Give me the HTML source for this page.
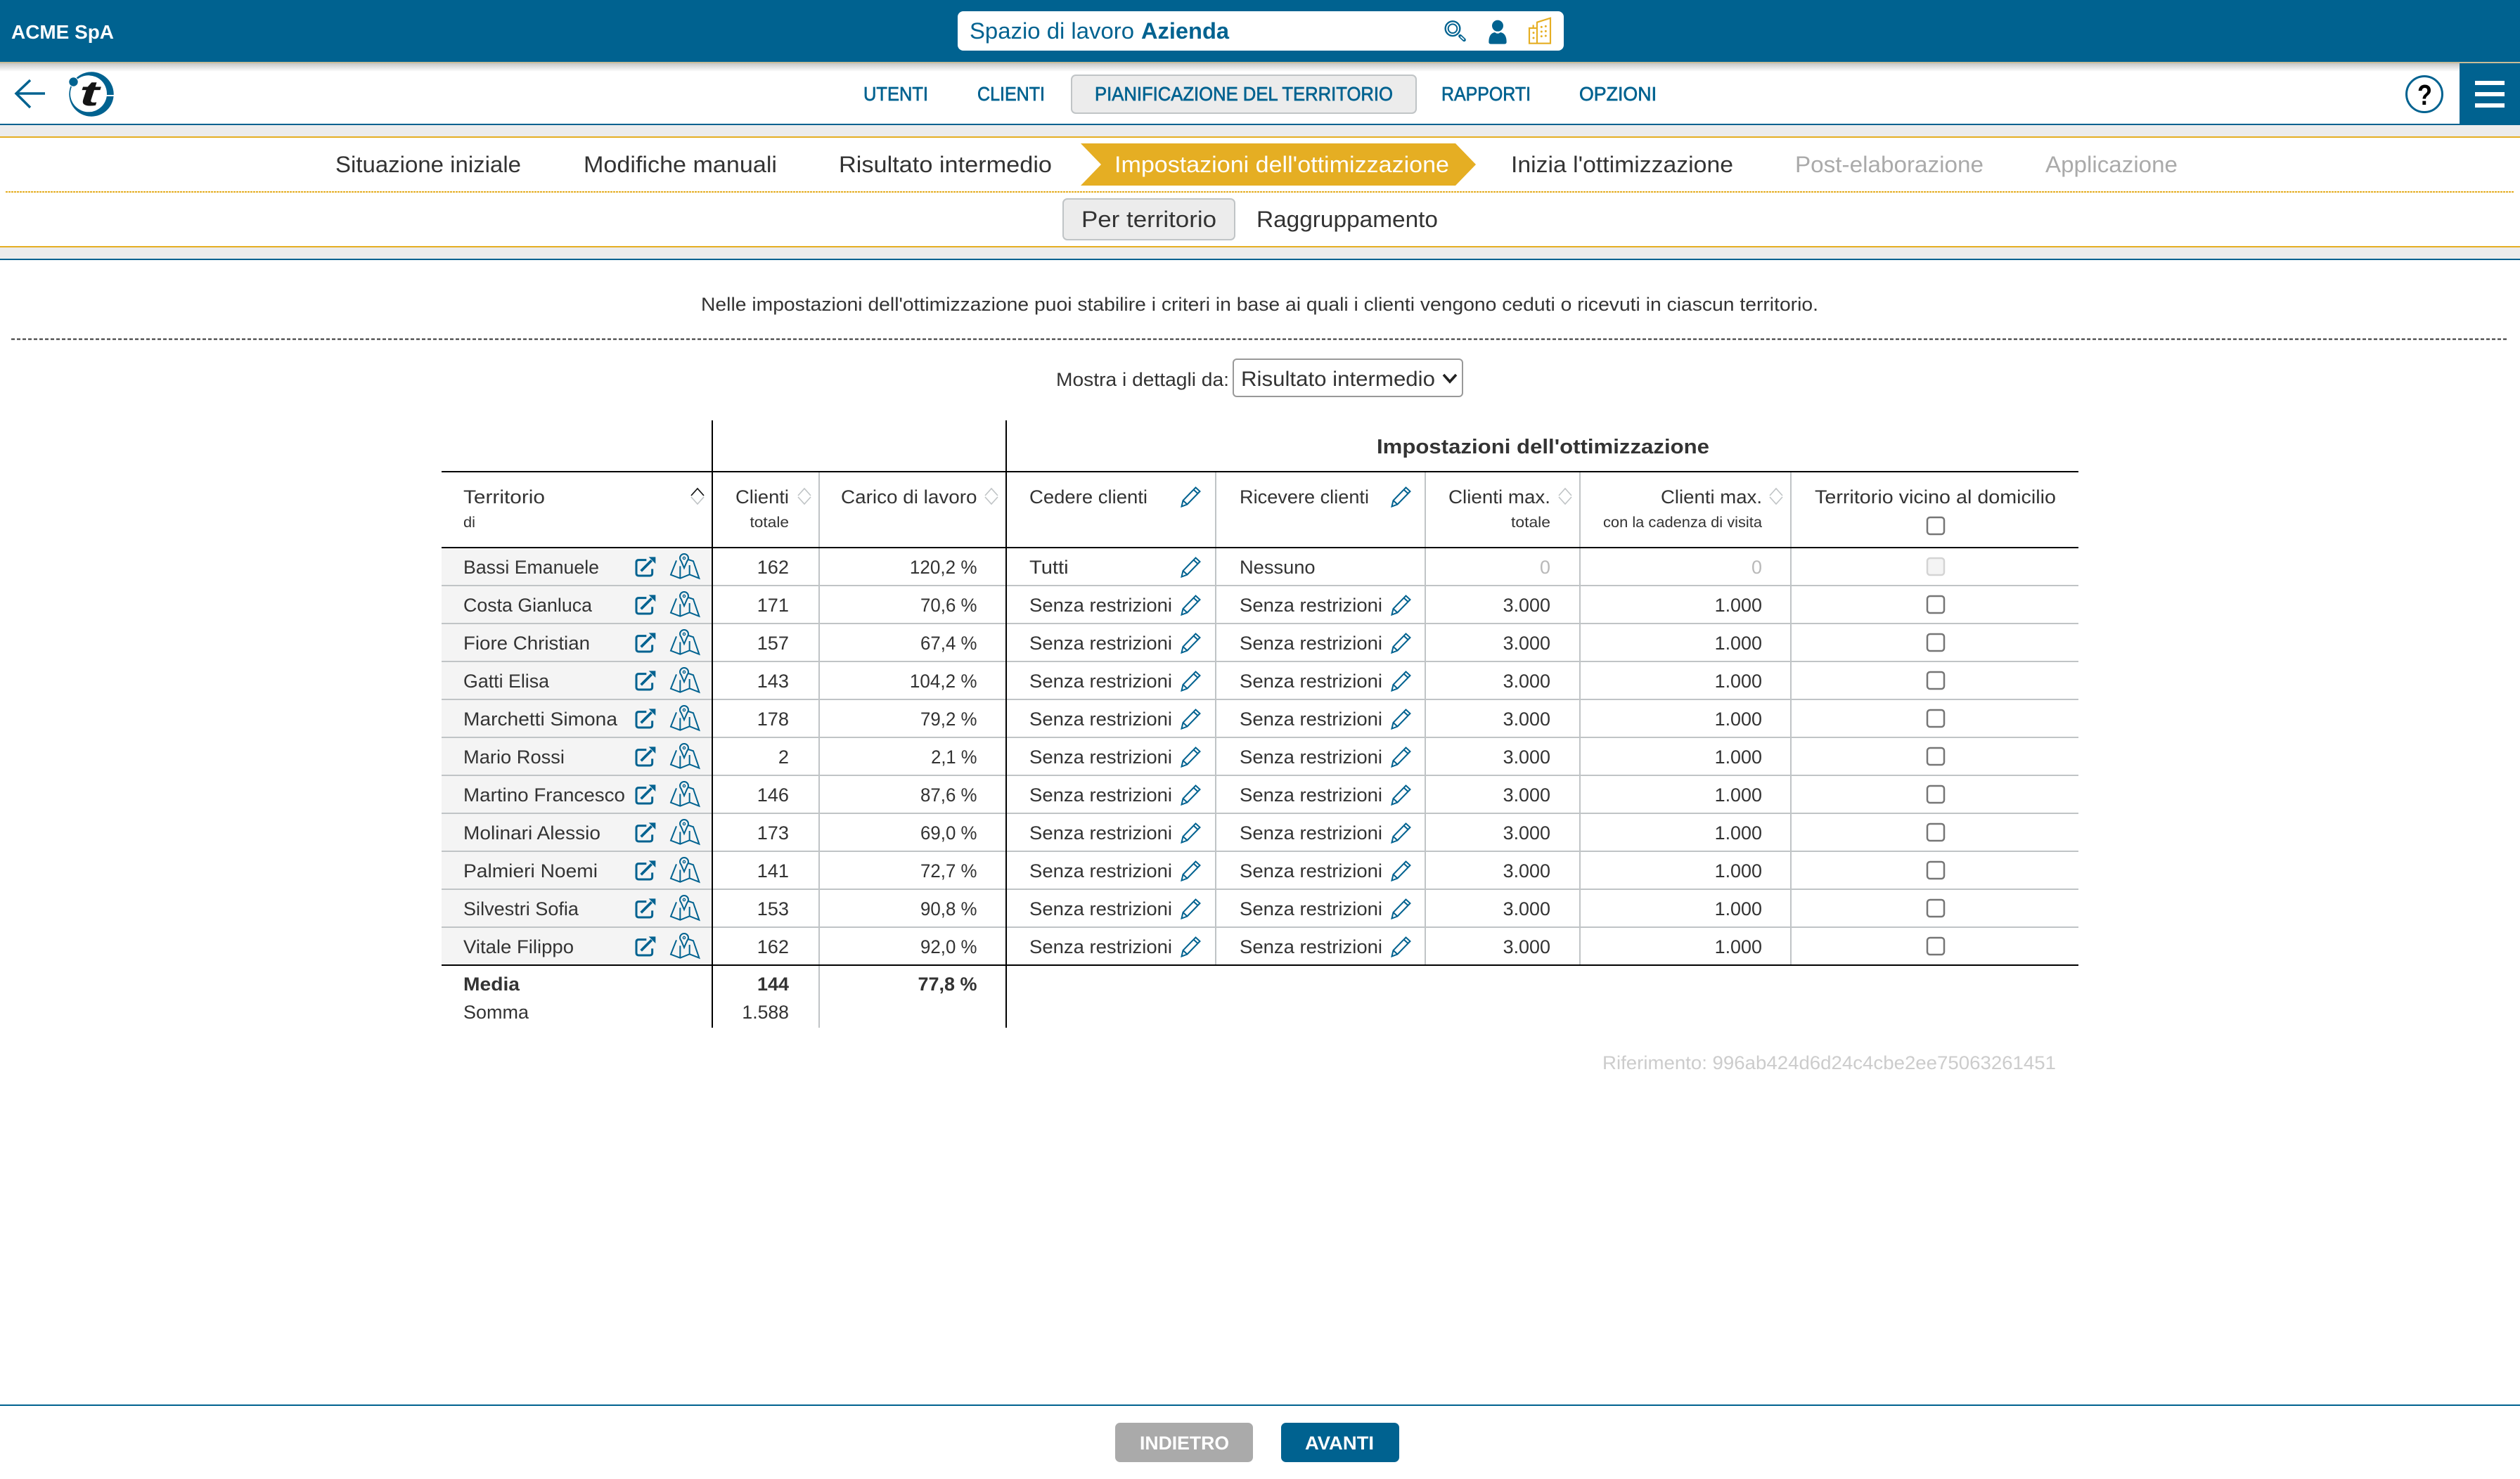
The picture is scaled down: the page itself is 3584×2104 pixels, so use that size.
<!DOCTYPE html>
<html lang="it"><head><meta charset="utf-8"><title>ACME SpA</title>
<style>
html,body{margin:0;padding:0;background:#fff;width:3584px;height:2104px;overflow:hidden}
svg{display:block}
text{font-family:"Liberation Sans",sans-serif;font-size:27px;fill:#333}
.e{text-anchor:end}
.b{font-weight:bold}
.s{font-size:21.2px}
.st{font-size:32.4px}
.nav{font-size:27.5px;fill:#006290;stroke:#006290;stroke-width:.7px}
.off{fill:#aaa}
.g{fill:#b9b9b9}
.gl{stroke:#c0c4c6;stroke-width:2}
.k{stroke:#000;stroke-width:2}
</style></head><body>
<svg xmlns="http://www.w3.org/2000/svg" width="3584" height="2104" viewBox="0 0 3584 2104">
<defs>
<linearGradient id="sh" x1="0" y1="0" x2="0" y2="1"><stop offset="0" stop-color="#000" stop-opacity=".22"/><stop offset="1" stop-color="#000" stop-opacity="0"/></linearGradient>
<g id="ri" fill="none" stroke="#006290">
<g transform="translate(880,780) scale(.33333)">
<path d="M118 50H85Q75 50 75 60V107Q75 117 85 117H133Q143 117 143 107V88" stroke-width="9"/>
<path d="M95 97L140 52" stroke-width="11"/>
<path d="M128 37H157V66Z" fill="#006290" stroke="none"/>
<path d="M246 52L222 113L262 128L302 112L343 128L318 55L297 48M262 128V76M302 112V72" stroke-width="6"/>
<path d="M266 54Q262 50 261 42A18 18 0 0 1 297 42Q296 50 292 54L279 84Z" stroke-width="6" fill="#f4f4f4"/>
<circle cx="279" cy="42" r="5" stroke-width="4"/>
</g></g>
<g id="pc" fill="none" stroke="#006290" stroke-width="2"><path transform="translate(1,0)" d="M1.5 28.5L3.5 20L21.5 1.5L27.5 7L9.5 25.5ZM3.5 20L9.5 25.5M18.5 4.5L24.5 10"/></g>
<g id="so" fill="none" stroke="#c0c4c6" stroke-width="1.6"><path d="M-9 10L0 0L9 10M-9 12L0 22L9 12"/></g>
<rect id="cb" width="24" height="24" rx="4" fill="#fff" stroke="#767676" stroke-width="2.5"/>
</defs>

<!-- top bar -->
<rect x="0" y="0" width="3584" height="88" fill="#006290"/>
<rect x="0" y="88" width="3584" height="2" fill="#c9bc98"/>
<rect x="0" y="90" width="3584" height="12" fill="url(#sh)"/>
<text x="16" y="55" class="b" style="font-size:28px;fill:#fff" textLength="146" lengthAdjust="spacingAndGlyphs">ACME SpA</text>
<rect x="1362" y="16" width="862" height="56" rx="8" fill="#fff"/>
<text x="1379" y="55" class="st" style="fill:#006290" textLength="234" lengthAdjust="spacingAndGlyphs">Spazio di lavoro</text>
<text x="1623" y="55" class="st b" style="fill:#006290" textLength="125" lengthAdjust="spacingAndGlyphs">Azienda</text>
<g transform="translate(2040,10) scale(.33333)">
<g fill="none" stroke="#006290"><circle cx="78" cy="92" r="31" stroke-width="7"/><circle cx="78" cy="92" r="19" stroke-width="6"/><path d="M110 124L127 140" stroke-width="15" stroke-linecap="round"/><path d="M113 127L125 138" stroke="#fff" stroke-width="5" stroke-linecap="round"/></g>
<circle cx="270" cy="80" r="24" fill="#006290"/>
<path d="M232 150Q232 112 258 108Q270 118 282 108Q308 112 308 150Q308 158 298 158H242Q232 158 232 150Z" fill="#006290"/>
<g fill="none" stroke="#e5ae23" stroke-width="6.5"><path d="M438 155V65L495 47V155ZM438 90H405V155H438M422 90V76"/></g>
<g fill="#e5ae23"><circle cx="457" cy="85" r="4.5"/><circle cx="475" cy="82" r="4.5"/><circle cx="457" cy="105" r="4.5"/><circle cx="475" cy="103" r="4.5"/><circle cx="457" cy="125" r="4.5"/><circle cx="475" cy="123" r="4.5"/><circle cx="423" cy="110" r="4.5"/><circle cx="423" cy="132" r="4.5"/></g>
</g>

<!-- nav -->
<path d="M43 114L23 133L43 153M23 133H64" fill="none" stroke="#006290" stroke-width="3.5"/>
<circle cx="130" cy="134" r="31.7" fill="#006290"/>
<circle cx="126" cy="133.3" r="26" fill="#fff"/>
<rect x="150" y="135" width="13" height="2" fill="#fff"/>
<circle cx="104.5" cy="116.5" r="7.2" fill="#fff"/><circle cx="104.5" cy="116.5" r="6.2" fill="#006290"/>
<text x="113" y="150" class="b" style="font-size:50px;font-style:italic;fill:#151515" textLength="28" lengthAdjust="spacingAndGlyphs">t</text>

<text x="1228" y="143" class="nav" textLength="92" lengthAdjust="spacingAndGlyphs">UTENTI</text>
<text x="1390" y="143" class="nav" textLength="96" lengthAdjust="spacingAndGlyphs">CLIENTI</text>
<rect x="1524" y="107" width="490" height="54" rx="6" fill="#ececec" stroke="#c0c4c6" stroke-width="2"/>
<text x="1557" y="143" class="nav" textLength="424" lengthAdjust="spacingAndGlyphs">PIANIFICAZIONE DEL TERRITORIO</text>
<text x="2050" y="143" class="nav" textLength="127" lengthAdjust="spacingAndGlyphs">RAPPORTI</text>
<text x="2246" y="143" class="nav" textLength="110" lengthAdjust="spacingAndGlyphs">OPZIONI</text>
<circle cx="3448" cy="134" r="25.5" fill="#fff" stroke="#006290" stroke-width="3"/>
<text x="3438" y="149" class="b" style="font-size:41px;fill:#000" textLength="21" lengthAdjust="spacingAndGlyphs">?</text>
<rect x="3498" y="90" width="86" height="88" fill="#006290"/>
<rect x="3520" y="115" width="42" height="6" fill="#fff"/><rect x="3520" y="131" width="42" height="6" fill="#fff"/><rect x="3520" y="147" width="42" height="6" fill="#fff"/>
<rect x="0" y="176" width="3584" height="2" fill="#006290"/>
<rect x="0" y="178" width="3584" height="16" fill="#ececec"/>
<rect x="0" y="194" width="3584" height="2" fill="#e5ae23"/>

<!-- steps -->
<text x="477" y="245" class="st" textLength="264" lengthAdjust="spacingAndGlyphs">Situazione iniziale</text>
<text x="830" y="245" class="st" textLength="275" lengthAdjust="spacingAndGlyphs">Modifiche manuali</text>
<text x="1193" y="245" class="st" textLength="303" lengthAdjust="spacingAndGlyphs">Risultato intermedio</text>
<polygon points="1537,204 2070,204 2099,234 2070,264 1537,264 1566,234" fill="#e5ae23"/>
<text x="1585" y="245" class="st" style="fill:#fff" textLength="476" lengthAdjust="spacingAndGlyphs">Impostazioni dell'ottimizzazione</text>
<text x="2149" y="245" class="st" textLength="316" lengthAdjust="spacingAndGlyphs">Inizia l'ottimizzazione</text>
<text x="2553" y="245" class="st off" textLength="268" lengthAdjust="spacingAndGlyphs">Post-elaborazione</text>
<text x="2909" y="245" class="st off" textLength="188" lengthAdjust="spacingAndGlyphs">Applicazione</text>
<line x1="8" y1="273" x2="3576" y2="273" stroke="#e5ae23" stroke-width="2" stroke-dasharray="3 1"/>
<rect x="1512" y="283" width="244" height="58" rx="6" fill="#ececec" stroke="#c0c4c6" stroke-width="2"/>
<text x="1538" y="323" class="st" textLength="192" lengthAdjust="spacingAndGlyphs">Per territorio</text>
<text x="1787" y="323" class="st" textLength="258" lengthAdjust="spacingAndGlyphs">Raggruppamento</text>
<rect x="0" y="350" width="3584" height="2" fill="#e5ae23"/>
<rect x="0" y="352" width="3584" height="16" fill="#ececec"/>
<rect x="0" y="368" width="3584" height="2" fill="#006290"/>

<!-- intro -->
<text x="997" y="442" textLength="1589" lengthAdjust="spacingAndGlyphs">Nelle impostazioni dell'ottimizzazione puoi stabilire i criteri in base ai quali i clienti vengono ceduti o ricevuti in ciascun territorio.</text>
<line x1="16" y1="482.5" x2="3568" y2="482.5" stroke="#333" stroke-width="2" stroke-dasharray="5 3"/>
<text x="1502" y="549" textLength="246" lengthAdjust="spacingAndGlyphs">Mostra i dettagli da:</text>
<rect x="1754" y="511" width="326" height="53" rx="5" fill="#fff" stroke="#999" stroke-width="2"/>
<text x="1765" y="549" style="font-size:29.5px" textLength="276" lengthAdjust="spacingAndGlyphs">Risultato intermedio</text>
<path d="M2053 533L2062 543L2071 533" fill="none" stroke="#222" stroke-width="3.6"/>

<!-- table backgrounds -->
<rect x="628" y="780" width="384" height="592" fill="#f4f4f4"/>

<text x="1958" y="645" class="b" style="font-size:29px" textLength="473" lengthAdjust="spacingAndGlyphs">Impostazioni dell'ottimizzazione</text>

<!-- header -->
<text x="659" y="716" textLength="116" lengthAdjust="spacingAndGlyphs">Territorio</text>
<text x="659" y="750" class="s" textLength="17" lengthAdjust="spacingAndGlyphs">di</text>
<use href="#so" x="992" y="695"/>
<path d="M983 705L992 695L1001 705" fill="none" stroke="#111" stroke-width="1.6"/>
<text x="1122" y="716" class="e" textLength="76" lengthAdjust="spacingAndGlyphs">Clienti</text>
<text x="1122" y="750" class="e s" textLength="55.5" lengthAdjust="spacingAndGlyphs">totale</text>
<use href="#so" x="1144" y="695"/>
<text x="1389.5" y="716" class="e" textLength="193.5" lengthAdjust="spacingAndGlyphs">Carico di lavoro</text>
<use href="#so" x="1410" y="695"/>
<text x="1464" y="716" textLength="168" lengthAdjust="spacingAndGlyphs">Cedere clienti</text>
<use href="#pc" x="1678" y="692"/>
<text x="1763" y="716" textLength="184" lengthAdjust="spacingAndGlyphs">Ricevere clienti</text>
<use href="#pc" x="1977" y="692"/>
<text x="2205" y="716" class="e" textLength="145" lengthAdjust="spacingAndGlyphs">Clienti max.</text>
<text x="2205" y="750" class="e s" textLength="56" lengthAdjust="spacingAndGlyphs">totale</text>
<use href="#so" x="2226" y="695"/>
<text x="2506" y="716" class="e" textLength="144" lengthAdjust="spacingAndGlyphs">Clienti max.</text>
<text x="2506" y="750" class="e s" textLength="226" lengthAdjust="spacingAndGlyphs">con la cadenza di visita</text>
<use href="#so" x="2526" y="695"/>
<text x="2581" y="716" textLength="343" lengthAdjust="spacingAndGlyphs">Territorio vicino al domicilio</text>
<use href="#cb" x="2741" y="736"/>

<!-- row 1 -->
<text x="659" y="816" textLength="193" lengthAdjust="spacingAndGlyphs">Bassi Emanuele</text>
<text x="1122" y="816" class="e" textLength="45.3" lengthAdjust="spacingAndGlyphs">162</text>
<text x="1389.5" y="816" class="e" textLength="95.6" lengthAdjust="spacingAndGlyphs">120,2 %</text>
<text x="1464" y="816" textLength="55.6" lengthAdjust="spacingAndGlyphs">Tutti</text>
<text x="1763" y="816" textLength="107.6" lengthAdjust="spacingAndGlyphs">Nessuno</text>
<text x="2205" y="816" class="e g" textLength="15" lengthAdjust="spacingAndGlyphs">0</text>
<text x="2506" y="816" class="e g" textLength="15" lengthAdjust="spacingAndGlyphs">0</text>
<rect x="2741" y="794" width="24" height="24" rx="4" fill="#f4f4f4" stroke="#d4d4d4" stroke-width="2.5"/>
<use href="#ri"/><use href="#pc" x="1678" y="792"/>

<!-- row 2 -->
<text x="659" y="870" textLength="183" lengthAdjust="spacingAndGlyphs">Costa Gianluca</text>
<text x="1122" y="870" class="e" textLength="45.3" lengthAdjust="spacingAndGlyphs">171</text>
<text x="1389.5" y="870" class="e" textLength="80.5" lengthAdjust="spacingAndGlyphs">70,6 %</text>
<text x="1464" y="870" textLength="203" lengthAdjust="spacingAndGlyphs">Senza restrizioni</text>
<text x="1763" y="870" textLength="203" lengthAdjust="spacingAndGlyphs">Senza restrizioni</text>
<text x="2205" y="870" class="e" textLength="67.4" lengthAdjust="spacingAndGlyphs">3.000</text>
<text x="2506" y="870" class="e" textLength="67.4" lengthAdjust="spacingAndGlyphs">1.000</text>
<use href="#cb" x="2741" y="848"/><use href="#ri" y="54"/><use href="#pc" x="1678" y="846"/><use href="#pc" x="1977" y="846"/>

<!-- row 3 -->
<text x="659" y="924" textLength="180" lengthAdjust="spacingAndGlyphs">Fiore Christian</text>
<text x="1122" y="924" class="e" textLength="45.3" lengthAdjust="spacingAndGlyphs">157</text>
<text x="1389.5" y="924" class="e" textLength="80.5" lengthAdjust="spacingAndGlyphs">67,4 %</text>
<text x="1464" y="924" textLength="203" lengthAdjust="spacingAndGlyphs">Senza restrizioni</text>
<text x="1763" y="924" textLength="203" lengthAdjust="spacingAndGlyphs">Senza restrizioni</text>
<text x="2205" y="924" class="e" textLength="67.4" lengthAdjust="spacingAndGlyphs">3.000</text>
<text x="2506" y="924" class="e" textLength="67.4" lengthAdjust="spacingAndGlyphs">1.000</text>
<use href="#cb" x="2741" y="902"/><use href="#ri" y="108"/><use href="#pc" x="1678" y="900"/><use href="#pc" x="1977" y="900"/>

<!-- row 4 -->
<text x="659" y="978" textLength="122" lengthAdjust="spacingAndGlyphs">Gatti Elisa</text>
<text x="1122" y="978" class="e" textLength="45.3" lengthAdjust="spacingAndGlyphs">143</text>
<text x="1389.5" y="978" class="e" textLength="95.6" lengthAdjust="spacingAndGlyphs">104,2 %</text>
<text x="1464" y="978" textLength="203" lengthAdjust="spacingAndGlyphs">Senza restrizioni</text>
<text x="1763" y="978" textLength="203" lengthAdjust="spacingAndGlyphs">Senza restrizioni</text>
<text x="2205" y="978" class="e" textLength="67.4" lengthAdjust="spacingAndGlyphs">3.000</text>
<text x="2506" y="978" class="e" textLength="67.4" lengthAdjust="spacingAndGlyphs">1.000</text>
<use href="#cb" x="2741" y="956"/><use href="#ri" y="162"/><use href="#pc" x="1678" y="954"/><use href="#pc" x="1977" y="954"/>

<!-- row 5 -->
<text x="659" y="1032" textLength="219" lengthAdjust="spacingAndGlyphs">Marchetti Simona</text>
<text x="1122" y="1032" class="e" textLength="45.3" lengthAdjust="spacingAndGlyphs">178</text>
<text x="1389.5" y="1032" class="e" textLength="80.5" lengthAdjust="spacingAndGlyphs">79,2 %</text>
<text x="1464" y="1032" textLength="203" lengthAdjust="spacingAndGlyphs">Senza restrizioni</text>
<text x="1763" y="1032" textLength="203" lengthAdjust="spacingAndGlyphs">Senza restrizioni</text>
<text x="2205" y="1032" class="e" textLength="67.4" lengthAdjust="spacingAndGlyphs">3.000</text>
<text x="2506" y="1032" class="e" textLength="67.4" lengthAdjust="spacingAndGlyphs">1.000</text>
<use href="#cb" x="2741" y="1010"/><use href="#ri" y="216"/><use href="#pc" x="1678" y="1008"/><use href="#pc" x="1977" y="1008"/>

<!-- row 6 -->
<text x="659" y="1086" textLength="144" lengthAdjust="spacingAndGlyphs">Mario Rossi</text>
<text x="1122" y="1086" class="e" textLength="15.1" lengthAdjust="spacingAndGlyphs">2</text>
<text x="1389.5" y="1086" class="e" textLength="65.4" lengthAdjust="spacingAndGlyphs">2,1 %</text>
<text x="1464" y="1086" textLength="203" lengthAdjust="spacingAndGlyphs">Senza restrizioni</text>
<text x="1763" y="1086" textLength="203" lengthAdjust="spacingAndGlyphs">Senza restrizioni</text>
<text x="2205" y="1086" class="e" textLength="67.4" lengthAdjust="spacingAndGlyphs">3.000</text>
<text x="2506" y="1086" class="e" textLength="67.4" lengthAdjust="spacingAndGlyphs">1.000</text>
<use href="#cb" x="2741" y="1064"/><use href="#ri" y="270"/><use href="#pc" x="1678" y="1062"/><use href="#pc" x="1977" y="1062"/>

<!-- row 7 -->
<text x="659" y="1140" textLength="230" lengthAdjust="spacingAndGlyphs">Martino Francesco</text>
<text x="1122" y="1140" class="e" textLength="45.3" lengthAdjust="spacingAndGlyphs">146</text>
<text x="1389.5" y="1140" class="e" textLength="80.5" lengthAdjust="spacingAndGlyphs">87,6 %</text>
<text x="1464" y="1140" textLength="203" lengthAdjust="spacingAndGlyphs">Senza restrizioni</text>
<text x="1763" y="1140" textLength="203" lengthAdjust="spacingAndGlyphs">Senza restrizioni</text>
<text x="2205" y="1140" class="e" textLength="67.4" lengthAdjust="spacingAndGlyphs">3.000</text>
<text x="2506" y="1140" class="e" textLength="67.4" lengthAdjust="spacingAndGlyphs">1.000</text>
<use href="#cb" x="2741" y="1118"/><use href="#ri" y="324"/><use href="#pc" x="1678" y="1116"/><use href="#pc" x="1977" y="1116"/>

<!-- row 8 -->
<text x="659" y="1194" textLength="195" lengthAdjust="spacingAndGlyphs">Molinari Alessio</text>
<text x="1122" y="1194" class="e" textLength="45.3" lengthAdjust="spacingAndGlyphs">173</text>
<text x="1389.5" y="1194" class="e" textLength="80.5" lengthAdjust="spacingAndGlyphs">69,0 %</text>
<text x="1464" y="1194" textLength="203" lengthAdjust="spacingAndGlyphs">Senza restrizioni</text>
<text x="1763" y="1194" textLength="203" lengthAdjust="spacingAndGlyphs">Senza restrizioni</text>
<text x="2205" y="1194" class="e" textLength="67.4" lengthAdjust="spacingAndGlyphs">3.000</text>
<text x="2506" y="1194" class="e" textLength="67.4" lengthAdjust="spacingAndGlyphs">1.000</text>
<use href="#cb" x="2741" y="1172"/><use href="#ri" y="378"/><use href="#pc" x="1678" y="1170"/><use href="#pc" x="1977" y="1170"/>

<!-- row 9 -->
<text x="659" y="1248" textLength="191" lengthAdjust="spacingAndGlyphs">Palmieri Noemi</text>
<text x="1122" y="1248" class="e" textLength="45.3" lengthAdjust="spacingAndGlyphs">141</text>
<text x="1389.5" y="1248" class="e" textLength="80.5" lengthAdjust="spacingAndGlyphs">72,7 %</text>
<text x="1464" y="1248" textLength="203" lengthAdjust="spacingAndGlyphs">Senza restrizioni</text>
<text x="1763" y="1248" textLength="203" lengthAdjust="spacingAndGlyphs">Senza restrizioni</text>
<text x="2205" y="1248" class="e" textLength="67.4" lengthAdjust="spacingAndGlyphs">3.000</text>
<text x="2506" y="1248" class="e" textLength="67.4" lengthAdjust="spacingAndGlyphs">1.000</text>
<use href="#cb" x="2741" y="1226"/><use href="#ri" y="432"/><use href="#pc" x="1678" y="1224"/><use href="#pc" x="1977" y="1224"/>

<!-- row 10 -->
<text x="659" y="1302" textLength="164" lengthAdjust="spacingAndGlyphs">Silvestri Sofia</text>
<text x="1122" y="1302" class="e" textLength="45.3" lengthAdjust="spacingAndGlyphs">153</text>
<text x="1389.5" y="1302" class="e" textLength="80.5" lengthAdjust="spacingAndGlyphs">90,8 %</text>
<text x="1464" y="1302" textLength="203" lengthAdjust="spacingAndGlyphs">Senza restrizioni</text>
<text x="1763" y="1302" textLength="203" lengthAdjust="spacingAndGlyphs">Senza restrizioni</text>
<text x="2205" y="1302" class="e" textLength="67.4" lengthAdjust="spacingAndGlyphs">3.000</text>
<text x="2506" y="1302" class="e" textLength="67.4" lengthAdjust="spacingAndGlyphs">1.000</text>
<use href="#cb" x="2741" y="1280"/><use href="#ri" y="486"/><use href="#pc" x="1678" y="1278"/><use href="#pc" x="1977" y="1278"/>

<!-- row 11 -->
<text x="659" y="1356" textLength="157" lengthAdjust="spacingAndGlyphs">Vitale Filippo</text>
<text x="1122" y="1356" class="e" textLength="45.3" lengthAdjust="spacingAndGlyphs">162</text>
<text x="1389.5" y="1356" class="e" textLength="80.5" lengthAdjust="spacingAndGlyphs">92,0 %</text>
<text x="1464" y="1356" textLength="203" lengthAdjust="spacingAndGlyphs">Senza restrizioni</text>
<text x="1763" y="1356" textLength="203" lengthAdjust="spacingAndGlyphs">Senza restrizioni</text>
<text x="2205" y="1356" class="e" textLength="67.4" lengthAdjust="spacingAndGlyphs">3.000</text>
<text x="2506" y="1356" class="e" textLength="67.4" lengthAdjust="spacingAndGlyphs">1.000</text>
<use href="#cb" x="2741" y="1334"/><use href="#ri" y="540"/><use href="#pc" x="1678" y="1332"/><use href="#pc" x="1977" y="1332"/>

<!-- footer rows -->
<text x="659" y="1409" class="b" textLength="80" lengthAdjust="spacingAndGlyphs">Media</text>
<text x="1122" y="1409" class="e b" textLength="45" lengthAdjust="spacingAndGlyphs">144</text>
<text x="1389.5" y="1409" class="e b" textLength="84" lengthAdjust="spacingAndGlyphs">77,8 %</text>
<text x="659" y="1449" textLength="93" lengthAdjust="spacingAndGlyphs">Somma</text>
<text x="1122" y="1449" class="e" textLength="66.6" lengthAdjust="spacingAndGlyphs">1.588</text>

<!-- table lines -->
<g class="gl">
<line x1="628" y1="833" x2="2956" y2="833"/><line x1="628" y1="887" x2="2956" y2="887"/><line x1="628" y1="941" x2="2956" y2="941"/><line x1="628" y1="995" x2="2956" y2="995"/><line x1="628" y1="1049" x2="2956" y2="1049"/><line x1="628" y1="1103" x2="2956" y2="1103"/><line x1="628" y1="1157" x2="2956" y2="1157"/><line x1="628" y1="1211" x2="2956" y2="1211"/><line x1="628" y1="1265" x2="2956" y2="1265"/><line x1="628" y1="1319" x2="2956" y2="1319"/>
<line x1="1165" y1="672" x2="1165" y2="1462"/>
<line x1="1729" y1="672" x2="1729" y2="1372"/>
<line x1="2027" y1="672" x2="2027" y2="1372"/>
<line x1="2247" y1="672" x2="2247" y2="1372"/>
<line x1="2547" y1="672" x2="2547" y2="1372"/>
</g>
<g class="k">
<line x1="628" y1="671" x2="2956" y2="671"/>
<line x1="628" y1="779" x2="2956" y2="779"/>
<line x1="628" y1="1373" x2="2956" y2="1373"/>
<line x1="1013" y1="598" x2="1013" y2="1462"/>
<line x1="1431" y1="598" x2="1431" y2="1462"/>
</g>

<text x="2279" y="1521" style="fill:#ccc" textLength="645" lengthAdjust="spacingAndGlyphs">Riferimento: 996ab424d6d24c4cbe2ee75063261451</text>

<!-- bottom -->
<rect x="0" y="1998" width="3584" height="2" fill="#006290"/>
<rect x="1586" y="2024" width="196" height="56" rx="7" fill="#aaa"/>
<text x="1621" y="2062" class="b" style="font-size:27px;fill:#fff" textLength="127" lengthAdjust="spacingAndGlyphs">INDIETRO</text>
<rect x="1822" y="2024" width="168" height="56" rx="7" fill="#006290"/>
<text x="1856" y="2062" class="b" style="font-size:27px;fill:#fff" textLength="98" lengthAdjust="spacingAndGlyphs">AVANTI</text>
</svg>
</body></html>
